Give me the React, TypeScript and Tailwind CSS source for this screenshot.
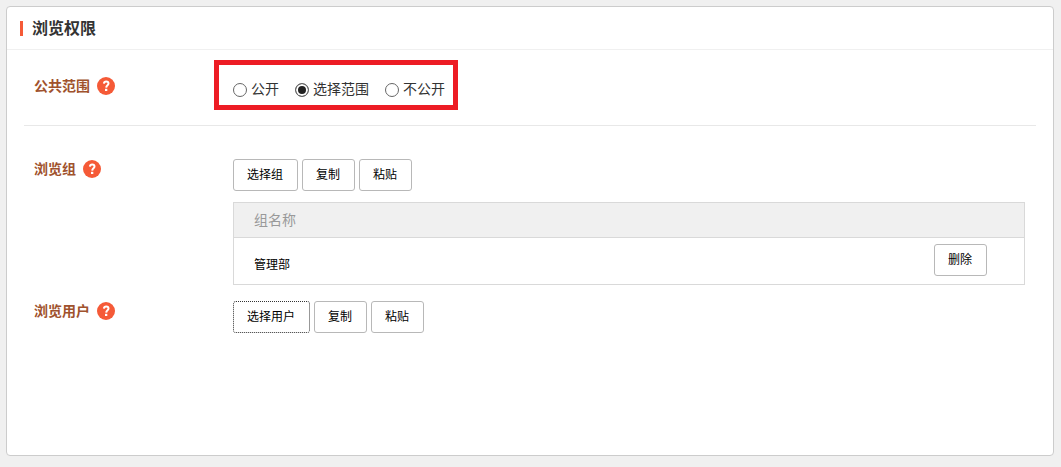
import { useState } from 'react'
import type { ButtonHTMLAttributes, ReactNode } from 'react'
import clsx from 'clsx'

const scopes = [
    { id: 'public', name: '公开' },
    { id: 'range', name: '选择范围' },
    { id: 'private', name: '不公开' },
]

const groups = [
    { id: 1, name: '管理部' },
]

const HelpIcon = () => (
    <svg viewBox="0 0 18 18" className="size-[18px]" aria-hidden="true">
        <circle cx="9" cy="9" r="9" fill="#f55a37" />
        <path d="M6.9 6.6C7.1 5.2 8 4.6 9.2 4.6C10.5 4.6 11.5 5.3 11.5 6.5C11.5 8.2 9.3 8.3 9.2 10.6" fill="none" stroke="#fff" strokeWidth="2" />
        <rect x="8" y="11.8" width="2.3" height="2.2" fill="#fff" />
    </svg>
)

const Button = ({ className, ...props }: ButtonHTMLAttributes<HTMLButtonElement>) => (
    <button
        type="button"
        className={clsx(
            'h-8 rounded-[3px] border bg-white pl-[13px] pr-[14px] pb-[2px] text-xs text-black',
            className ?? 'border-[#b8b8b8]'
        )}
        {...props}
    />
)

const Label = ({ children }: { children: ReactNode }) => (
    <div className="flex h-5 w-[190px] shrink-0 items-center gap-[7px] pl-[10px] text-sm font-bold text-[#a0522d]">
        <span className="pb-[2px]">{children}</span>
        <HelpIcon />
    </div>
)

const App = () => {

    const [scope, setScope] = useState('range');

    return (
        <div className="flex min-h-screen flex-col bg-[#f0f0f0] pt-[6px] pr-[7px] pb-[11px] pl-[6px] font-['Noto_Sans_CJK_SC',sans-serif]">
            <main className="flex-1 rounded border border-[#ccc] bg-white">
                <header className="flex h-[43px] items-center border-b border-[#f0f0f0] px-[13px]">
                    <h1 className="flex items-center gap-[9px] text-base leading-5 font-bold text-[#333]">
                        <span className="h-[15px] w-[3px] bg-[#f55a37]" />
                        <span className="pb-[3px]">浏览权限</span>
                    </h1>
                </header>
                <div className="px-[17px]">
                    <section className="flex border-b border-[#e8e8e8] pt-[10px] pb-[15px]">
                        <div className="pt-4">
                            <Label>公共范围</Label>
                        </div>
                        <div
                            role="radiogroup"
                            aria-label="公共范围"
                            className="flex h-[50px] gap-4 border-5 border-[#ed1c24] pt-[14px] pr-2 pl-[14px]"
                        >
                            {scopes.map((item) => (
                                <label key={item.id} className="flex h-5 items-center gap-1 text-sm text-[#333]">
                                    <input
                                        type="radio"
                                        name="scope"
                                        checked={scope === item.id}
                                        onChange={() => setScope(item.id)}
                                        className="mt-[2px] size-[14px] appearance-none rounded-full border border-[#666] bg-white checked:bg-[#222] checked:shadow-[inset_0_0_0_2px_#fff]"
                                    />
                                    <span className="pb-[2px]">{item.name}</span>
                                </label>
                            ))}
                        </div>
                    </section>
                    <section className="flex pt-[33px]">
                        <Label>浏览组</Label>
                        <div className="min-w-0 flex-1 pr-[11px] pl-[19px]">
                            <div className="flex gap-1">
                                <Button>选择组</Button>
                                <Button>复制</Button>
                                <Button>粘贴</Button>
                            </div>
                            <table className="mt-[11px] w-full border-collapse border border-[#d9d9d9]">
                                <thead>
                                    <tr className="h-[35px] border-b border-[#d9d9d9] bg-[#f0f0f0]">
                                        <th colSpan={2} className="pb-[2px] pl-5 text-left text-sm font-normal text-[#999]">组名称</th>
                                    </tr>
                                </thead>
                                <tbody>
                                    {groups.map((group) => (
                                        <tr key={group.id} className="h-[47px]">
                                            <td className="pt-[6px] pl-5 text-xs text-black">{group.name}</td>
                                            <td className="pt-[6px] pr-[37px] text-right align-top">
                                                <Button>删除</Button>
                                            </td>
                                        </tr>
                                    ))}
                                </tbody>
                            </table>
                        </div>
                    </section>
                    <section className="flex pt-4">
                        <Label>浏览用户</Label>
                        <div className="flex gap-1 pl-[19px]">
                            <Button className="border-dotted border-[#333]">选择用户</Button>
                            <Button>复制</Button>
                            <Button>粘贴</Button>
                        </div>
                    </section>
                </div>
            </main>
        </div>
    )
}

export default App;
